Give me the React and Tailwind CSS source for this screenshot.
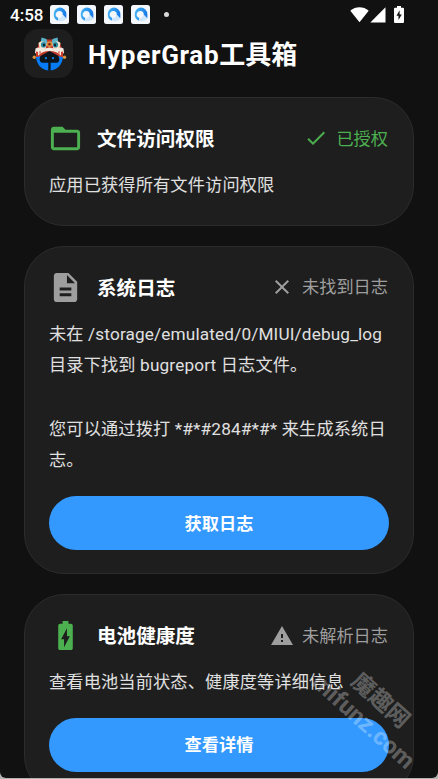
import {
  MdBatteryChargingFull,
  MdCheck,
  MdClose,
  MdDescription,
  MdFolderOpen,
  MdWarning,
} from 'react-icons/md';

const NOTIFICATIONS = [1, 2, 3, 4];

const CARDS = [
  {
    id: 'files',
    icon: MdFolderOpen,
    iconColor: 'text-[#4caf50]',
    title: '文件访问权限',
    statusIcon: MdCheck,
    status: '已授权',
    statusColor: 'text-[#4caf50]',
    lines: ['应用已获得所有文件访问权限'],
  },
  {
    id: 'logs',
    icon: MdDescription,
    iconColor: 'text-[#9e9e9e]',
    title: '系统日志',
    statusIcon: MdClose,
    status: '未找到日志',
    statusColor: 'text-[#9e9e9e]',
    lines: [
      '未在 /storage/emulated/0/MIUI/debug_log',
      '目录下找到 bugreport 日志文件。',
      '',
      '您可以通过拨打 *#*#284#*#* 来生成系统日',
      '志。',
    ],
    action: '获取日志',
  },
  {
    id: 'battery',
    icon: MdBatteryChargingFull,
    iconColor: 'text-[#4caf50]',
    title: '电池健康度',
    statusIcon: MdWarning,
    status: '未解析日志',
    statusColor: 'text-[#9e9e9e]',
    lines: ['查看电池当前状态、健康度等详细信息'],
    action: '查看详情',
  },
];

function BrowserBadge() {
  return (
    <svg viewBox="0 0 19 19" className="size-[19px]">
      <defs>
        <linearGradient id="ring" x1="0" y1="0.3" x2="1" y2="0.5">
          <stop offset="0" stopColor="#45b4f5" />
          <stop offset="1" stopColor="#1678e8" />
        </linearGradient>
      </defs>
      <rect width="19" height="19" rx="2.5" fill="#f4f7fb" />
      <path d="M9.500 2.600a6.800 6.800 0 0 1 6.900 6.900l-.1 4-3.600-3.700a3.500 3.500 0 1 0-4.700 2.900l.2 3A6.800 6.800 0 0 1 9.500 2.600Z" fill="url(#ring)" />
      <path d="M8 12.700c2 .8 4.200-.5 4.700-2.900l3.600 3.700c-1.500 2.400-5.100 3.400-8.100 2.200Z" fill="#cfe7fc" />
    </svg>
  );
}

function StatusBar() {
  return (
    <div className="flex h-[29px] items-center pl-[10px] pr-[34px]">
      <span className="w-[40px] pt-[2px] text-[17px] font-medium text-white">4:58</span>
      <div className="flex gap-[8px]">
        {NOTIFICATIONS.map(n => <BrowserBadge key={n} />)}
      </div>
      <span className="ml-[14px] size-[5px] rounded-full bg-[#d8d8d8]" />
      <div className="ml-auto flex items-center">
        <svg viewBox="0 0 19 16" className="h-[16px] w-[19px]" fill="white">
          <path d="M.3 3.700C5.600-.9 13.400-.9 18.700 3.700L9.500 15.300Z" />
        </svg>
        <svg viewBox="0 0 16 16" className="ml-[1px] h-[16px] w-[16px]" fill="white">
          <path d="M.3 15.500L15.500.3V15.500Z" />
        </svg>
        <svg viewBox="0 0 10 17" className="ml-[8px] h-[17px] w-[10px]">
          <path d="M3 0h4v1.700h2q1 0 1 1V16q0 1-1 1H1q-1 0-1-1V2.700q0-1 1-1h2Z" fill="white" />
          <path d="M5.600 4.300L2.500 9.800h2v4.300L7.800 8.600H5.600Z" fill="#111" />
        </svg>
      </div>
    </div>
  );
}

function AppLogo() {
  return (
    <div className="flex size-[49px] items-center justify-center rounded-[14px] bg-[#1e1e1e]">
      <svg viewBox="0 0 36 36" className="size-[36px]">
        {/* blue face */}
        <path d="M5 19C4.500 27 10 34.300 17.400 34.500V27h2v7.500C27 34.300 32.500 27 32 19L26 14H11Z" fill="#067bf4" />
        <path d="M8.700 24c0-5.500 3.500-9 9.800-9s9.800 3.500 9.800 9c0 2-2 2.800-4 2.800h-4.900V34.600h-1.800v-7.800h-4.900c-2 0-4-.8-4-2.800Z" fill="#0c141c" />
        <circle cx="14.900" cy="22.200" r="1.100" fill="#1683ef" />
        <circle cx="22" cy="22.200" r="1.100" fill="#1683ef" />
        {/* lion hat */}
        <path d="M8 7l4-3.500h13L29 7l2.500 7 .5 7-3.500-.5L18.500 15 8.500 20.500 5 21l.5-7Z" fill="#c4392a" />
        <path d="M10.500 1.500l5 1.500 1 4-7 1ZM26.500 1.500l-5 1.500-1 4 7 1Z" fill="#5ab4c9" />
        <path d="M4.500 12.500c4-2.500 9 1 14-1 5 2 10-1.500 14 1l.5 4.500-3.500 2.500c-2-3-6-4.500-11-4.500s-9 1.500-11 4.500L4 17Z" fill="#f3eadf" />
        <path d="M7.500 7c3-2.500 6.500-1.500 8.500 1l-1.500 4.500-6-.5ZM29.500 7C26.500 4.500 23 5.500 21 8l1.500 4.500 6-.5Z" fill="#f0e2c8" />
        <ellipse cx="12.500" cy="8.800" rx="2.600" ry="2.800" fill="#2c8fa8" />
        <ellipse cx="24.500" cy="8.800" rx="2.600" ry="2.800" fill="#2c8fa8" />
        <ellipse cx="13" cy="9" rx="1.200" ry="1.600" fill="#14232c" />
        <ellipse cx="24" cy="9" rx="1.200" ry="1.600" fill="#14232c" />
        <path d="M16.500 5.500h4l1 3.500-3 3-3-3Z" fill="#d9903d" />
        <circle cx="18.500" cy="8.300" r="1.300" fill="#7d2018" />
        <path d="M5 15.500l2 .5v4l-2 1ZM32 15.500l-2 .5v4l2 1ZM8.500 15l1.500 1-1.500 2ZM28.500 15L27 16l1.500 2Z" fill="#d33827" />
        <circle cx="3.300" cy="21.300" r="1.700" fill="#dc943e" />
        <circle cx="33.500" cy="21.300" r="1.700" fill="#dc943e" />
      </svg>
    </div>
  );
}

function Card({ card }) {
  const Icon = card.icon;
  const StatusIcon = card.statusIcon;
  return (
    <section className="shrink-0 rounded-[40px] border-[1.5px] border-[#2c2c2c] bg-[#1e1e1e] pb-[23px] pl-[24px] pr-[24px] pt-[23px]">
      <div className="flex h-[35px] items-center">
        <Icon className={`-ml-px size-[35px] ${card.iconColor}`} />
        <h2 className="ml-[14px] pt-[3px] text-[19.600px] font-bold text-white">{card.title}</h2>
        <div className={`ml-auto mr-px flex items-center gap-[8px] ${card.statusColor}`}>
          <StatusIcon className="size-[24px]" />
          <span className="pt-[2px] text-[17.200px]">{card.status}</span>
        </div>
      </div>
      <div className="mt-[14px] text-[17.200px] leading-[31.700px] tracking-[0.150px] text-[#e0e0e0]">
        {card.lines.map((line, i) => (
          <p key={i} className="h-[31.700px] whitespace-nowrap">{line}</p>
        ))}
      </div>
      {card.action && (
        <button className="mt-[19px] block h-[54px] w-full rounded-full bg-[#3399ff] pt-[3px] text-[17.200px] font-bold text-white">
          {card.action}
        </button>
      )}
    </section>
  );
}

export default function App() {
  return (
    <div className="relative h-[779px] w-[438px] overflow-hidden bg-[#b5b2b4] font-[Roboto,'Noto_Sans_CJK_SC',sans-serif]">
      <div className="h-[778px] overflow-hidden rounded-b-[6px] bg-[#111111]">
        <StatusBar />
        <header className="flex h-[49px] items-center gap-[15px] px-[24px]">
          <AppLogo />
          <h1 className="pt-[4px] text-[26px] font-bold text-white">
            <span className="tracking-[0.700px]">HyperGrab</span>工具箱
          </h1>
        </header>
        <main className="mt-[19px] flex flex-col gap-[20px] px-[24px]">
          {CARDS.map(card => <Card key={card.id} card={card} />)}
        </main>
      </div>

      {/* Watermark */}
      <div className="pointer-events-none absolute left-[304px] top-[686px] w-[140px] rotate-[42deg] text-center font-bold text-white/30">
        <div className="pr-[6px] text-[23px] leading-[27px]">魔趣网</div>
        <div className="pr-[4px] text-[24px] leading-[26px]">mifunz.com</div>
      </div>
    </div>
  );
}
